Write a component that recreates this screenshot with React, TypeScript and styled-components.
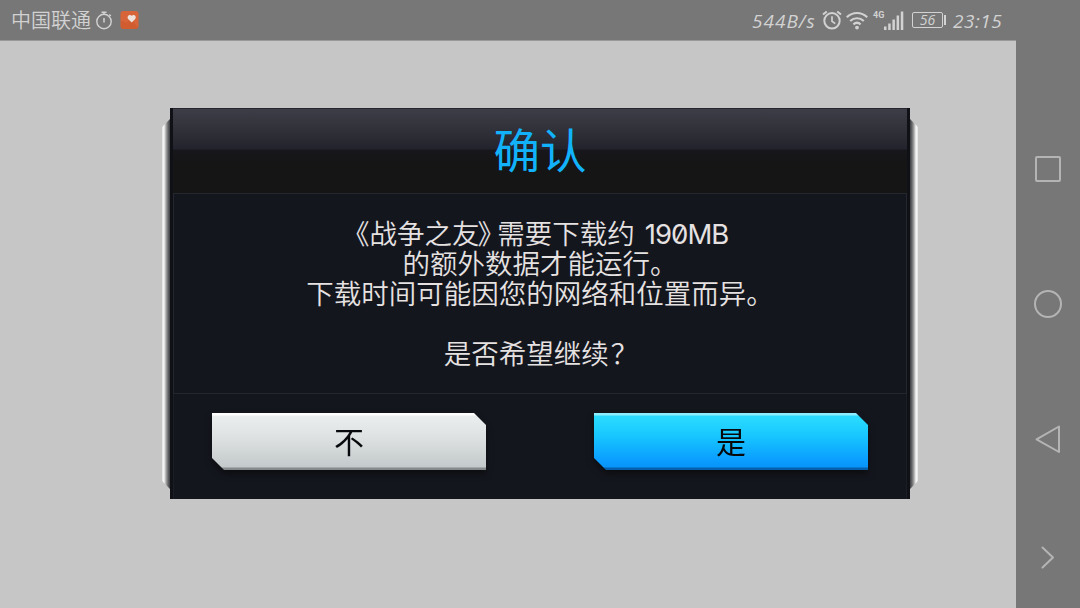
import React from 'react';
import styled, { createGlobalStyle } from 'styled-components';

const colors = {
  chrome: '#777777',
  chromeText: '#d2d2d2',
  chromeIcon: '#b4b4b4',
  page: '#c6c6c6',
  panel: '#14161e',
  line: '#25272f',
  accent: '#12b2fb',
  text: '#e6e2e2',
};

const cjk = '"Noto Sans CJK SC", sans-serif';

const GlobalStyle = createGlobalStyle`
  * {
    box-sizing: border-box;
  }

  body {
    margin: 0;
    overflow: hidden;
    font-family: ${cjk};
  }
`;

const Screen = styled.div`
  display: grid;
  grid-template-columns: 1fr 64px;
  width: 1080px;
  height: 608px;
  background: ${colors.page};
`;

const Main = styled.div`
  display: flex;
  flex-direction: column;
`;

const StatusBar = styled.header`
  display: flex;
  align-items: center;
  justify-content: space-between;
  flex: none;
  height: 41px;
  padding: 0 14px 0 11px;
  background: ${colors.chrome};
  border-bottom: 1px solid #999999;
  color: ${colors.chromeText};

  svg {
    display: block;
    flex: none;
  }
`;

const StatusGroup = styled.div<{ $gap?: number }>`
  display: flex;
  align-items: center;
  gap: ${p => p.$gap || 0}px;
  height: 40px;
`;

const Carrier = styled.span`
  width: 84px;
  font-size: 20px;
  line-height: 40px;
  font-weight: 350;
  white-space: nowrap;
`;

const StatusText = styled.span<{ $width: number; $spacing: number }>`
  width: ${p => p.$width}px;
  padding-top: 2px;
  font-family: 'Open Sans', sans-serif;
  font-size: 19px;
  font-style: italic;
  font-weight: 400;
  letter-spacing: ${p => p.$spacing}px;
  line-height: 38px;
  white-space: nowrap;
`;

const Battery = styled.div`
  display: flex;
  align-items: center;
  gap: 1px;
  margin: 0 7px 0 8px;

  &::after {
    content: '';
    width: 2px;
    height: 10px;
    background: ${colors.chromeText};
  }
`;

const BatteryLevel = styled.span`
  width: 31px;
  height: 16px;
  border: 1px solid ${colors.chromeText};
  border-radius: 2px;
  font-family: 'Open Sans', sans-serif;
  font-size: 14px;
  font-style: italic;
  line-height: 14px;
  text-align: center;
`;

const NavBar = styled.nav`
  display: flex;
  flex-direction: column;
  align-items: center;
  background: ${colors.chrome};
  padding-top: 153px;
`;

const NavIcon = styled.svg<{ $gap?: number }>`
  flex: none;
  width: 32px;
  height: 32px;
  margin-bottom: ${p => p.$gap || 0}px;
  fill: none;
  stroke: ${colors.chromeIcon};
  stroke-width: 2;
  stroke-linejoin: round;
  stroke-linecap: round;
`;

const Stage = styled.main`
  display: flex;
  align-items: flex-start;
  padding: 67px 0 0 162px;
`;

const Rail = styled.div<{ $side: 'left' | 'right' }>`
  width: 8px;
  height: 370px;
  margin-top: 11px;
  background: linear-gradient(
    to ${p => p.$side},
    #3c3e42 0,
    #66686a 2px,
    #8a8a8a 3px,
    #a8a8a8 4px,
    #d0d0d0 5px,
    #f4f4f4 6px,
    #f4f4f4 7px,
    #dadada 8px
  );
  clip-path: ${p =>
    p.$side === 'left'
      ? 'polygon(100% 0, 0 8px, 0 362px, 100% 100%)'
      : 'polygon(0 0, 100% 8px, 100% 362px, 0 100%)'};
`;

const Dialog = styled.section`
  display: flex;
  flex-direction: column;
  width: 740px;
  height: 391px;
  padding: 0 3px;
  background: ${colors.panel};
  box-shadow: inset 3px 0 #101117, inset -3px 0 #101117;
`;

const Title = styled.h1`
  height: 86px;
  margin: 0;
  border-top: 1px solid #25262e;
  border-bottom: 1px solid ${colors.line};
  background: linear-gradient(
    #3d3d48 0,
    #32333a 18px,
    #23232d 40px,
    #17171c 41px,
    #151515 56px,
    #151515 100%
  );
  color: ${colors.accent};
  font-size: 46.5px;
  font-weight: 400;
  line-height: 78px;
  text-align: center;
`;

const Message = styled.div`
  height: 200px;
  padding-top: 23px;
  border: 1px solid ${colors.line};
  border-top: 0;
  color: ${colors.text};
  font-size: 27.5px;
  font-weight: 350;
  line-height: 30px;
  text-align: center;
  white-space: nowrap;
`;

const Line = styled.p<{ $indent?: number }>`
  height: 30px;
  margin: 0;
  padding-left: ${p => p.$indent || 0}px;
`;

const Bracket = styled.span<{ $pull?: number }>`
  margin-left: -${p => p.$pull || 0}px;
  font-feature-settings: 'halt';
`;

const QuestionMark = styled.span`
  margin-left: 2px;
  margin-right: -2px;
`;

const Amount = styled.span`
  margin-left: 10px;
  font-family: Inter, sans-serif;
  font-feature-settings: 'zero';
  font-weight: 400;
  letter-spacing: -1px;
`;

const Actions = styled.footer`
  display: flex;
  justify-content: space-between;
  flex: 1;
  padding: 19px 38px 0;
  border: 1px solid #1c1e26;
  border-width: 0 1px;
`;

const cut = 'polygon(0 0, 262px 0, 100% 12px, 100% 100%, 12px 100%, 0 45px)';

const Button = styled.button<{ $primary?: boolean }>`
  width: 274px;
  height: 57px;
  padding: 0 0 4px;
  border: 0;
  background: ${p =>
    p.$primary
      ? 'linear-gradient(#8eeeff 0, #8eeeff 2px, #2bdcff 3px, #18c8ff 22px, #0a9cff 48px, #0894f8 54px, #0561ad 55px, #0561ad 100%)'
      : 'linear-gradient(#ffffff 0, #ffffff 2px, #eaeeef 3px, #dde1e1 25px, #c4c9cb 54px, #85898b 55px, #85898b 100%)'};
  clip-path: ${cut};
  color: #08090c;
  font-family: ${cjk};
  font-size: 30px;
  font-weight: 400;
  line-height: 52px;
`;

const ButtonShadow = styled.div`
  height: 57px;
  filter: drop-shadow(0 4px 3px #0c0d10);
`;

const StopwatchIcon = () => (
  <svg width="18" height="20" viewBox="0 0 18 20" fill="none" stroke="currentColor">
    <circle cx="9" cy="11.5" r="7.2" strokeWidth="1.4" />
    <path d="M9 8v4.5M6.5 2.2h5M9 2.2v2.3M14.3 4.5l1.5 1.5" strokeWidth="1.5" />
  </svg>
);

const HealthIcon = () => (
  <svg width="19" height="20" viewBox="0 0 20 20">
    <rect x="0.5" y="0.5" width="19" height="19" rx="3.5" fill="#d76539" />
    <path d="M1 11l6 2 4-4 8 9-2 1.5H3L1 17z" fill="#c95327" opacity=".5" />
    <path
      d="M12.3 12.5L8.8 9.2C6.4 6.5 9.8 3 12.3 5.6c2.5-2.6 5.9.9 3.5 3.6z"
      fill="#eee2dc"
    />
  </svg>
);

const AlarmIcon = () => (
  <svg width="20" height="20" viewBox="0 0 20 20" fill="none" stroke="currentColor">
    <circle cx="10" cy="10.8" r="7.7" strokeWidth="2" />
    <path d="M10 6.2v5l3.2 2.4" strokeWidth="1.7" />
    <path d="M1 4.6l3.8-3.2M19 4.6l-3.8-3.2" strokeWidth="1.9" />
  </svg>
);

const WifiIcon = () => (
  <svg width="22" height="19" viewBox="0 0 22 19" fill="none" stroke="currentColor">
    <path d="M.8 6.2c5.8-5.6 14.6-5.6 20.4 0" strokeWidth="2.2" />
    <path d="M4.2 10c3.9-3.7 9.7-3.7 13.6 0" strokeWidth="2.2" />
    <path d="M7.4 13.3c2.2-1.9 5-1.9 7.2 0" strokeWidth="2.2" />
    <circle cx="11" cy="16.6" r="1.9" fill="currentColor" stroke="none" />
  </svg>
);

const NetworkType = styled.span`
  align-self: flex-start;
  width: 11px;
  margin: 9px 0 0 1px;
  font-family: Roboto, sans-serif;
  font-size: 9px;
  font-weight: 700;
  line-height: 12px;
`;

const SignalIcon = () => (
  <svg width="20" height="19" viewBox="0 0 20 19" fill="currentColor">
    <path d="M0 15.5h2.5V19H0zM4.2 12.5h2.5V19H4.2zM8.4 8.5h2.5V19H8.4zM12.6 4.5h2.5V19h-2.5zM16.8.5h2.5V19h-2.5z" />
  </svg>
);

export default function App() {
  return (
    <>
      <GlobalStyle />
      <Screen>
        <Main>
          <StatusBar>
            <StatusGroup $gap={7}>
              <StatusGroup>
                <Carrier>中国联通</Carrier>
                <StopwatchIcon />
              </StatusGroup>
              <HealthIcon />
            </StatusGroup>
            <StatusGroup>
              <StatusText $width={70} $spacing={1}>
                544B/s
              </StatusText>
              <StatusGroup $gap={4}>
                <AlarmIcon />
                <WifiIcon />
                <NetworkType>4G</NetworkType>
              </StatusGroup>
              <SignalIcon />
              <Battery>
                <BatteryLevel>56</BatteryLevel>
              </Battery>
              <StatusText $width={49} $spacing={0.5}>
                23:15
              </StatusText>
            </StatusGroup>
          </StatusBar>
          <Stage>
            <Rail $side="left" />
            <Dialog>
              <Title>确认</Title>
              <Message>
                <Line $indent={4}>
                  <Bracket>《</Bracket>战争之友<Bracket $pull={2}>》</Bracket> 需要下载约
                  <Amount>190MB</Amount>
                </Line>
                <Line>的额外数据才能运行。</Line>
                <Line>下载时间可能因您的网络和位置而异。</Line>
                <Line />
                <Line>
                  是否希望继续<QuestionMark>？</QuestionMark>
                </Line>
              </Message>
              <Actions>
                <ButtonShadow>
                  <Button>不</Button>
                </ButtonShadow>
                <ButtonShadow>
                  <Button $primary>是</Button>
                </ButtonShadow>
              </Actions>
            </Dialog>
            <Rail $side="right" />
          </Stage>
        </Main>
        <NavBar>
          <NavIcon $gap={103} viewBox="0 0 32 32">
            <rect x="4" y="4" width="24" height="24" rx="1" />
          </NavIcon>
          <NavIcon $gap={103} viewBox="0 0 32 32">
            <circle cx="16" cy="16" r="13" />
          </NavIcon>
          <NavIcon $gap={86} viewBox="0 0 32 32">
            <path d="M4.5 16.3L27 3.5v25.5z" />
          </NavIcon>
          <NavIcon viewBox="0 0 32 32">
            <path d="M10.5 6.5l10.5 10L10.5 26.5" />
          </NavIcon>
        </NavBar>
      </Screen>
    </>
  );
}
